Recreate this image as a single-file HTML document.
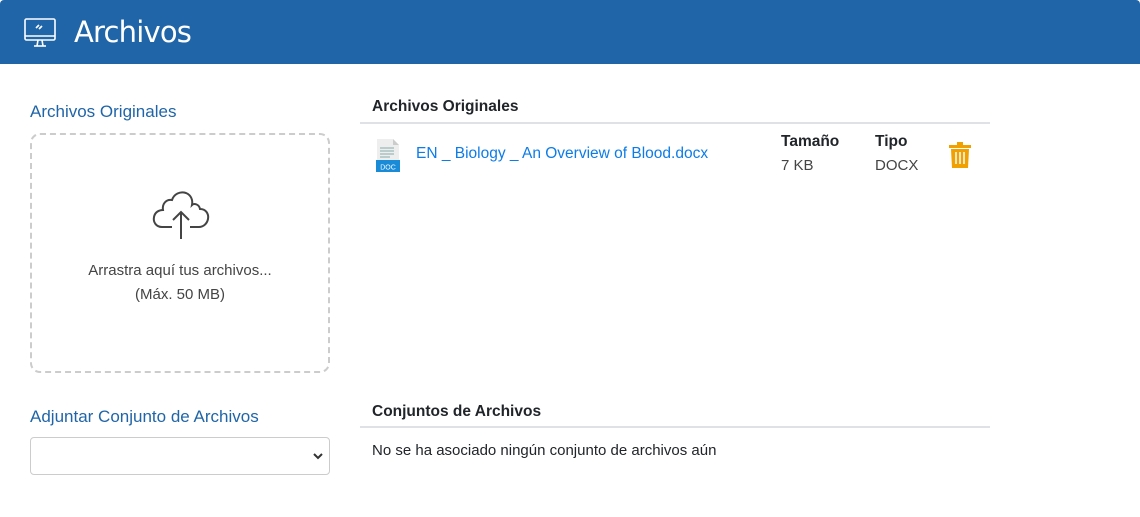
<!DOCTYPE html>
<html><head><meta charset="utf-8"><style>
*{box-sizing:border-box;margin:0;padding:0}
body{width:1140px;height:517px;background:#fff;font-family:"Liberation Sans",sans-serif;position:relative;overflow:hidden;color:#212529}
.hdr{position:absolute;left:0;top:0;width:1140px;height:64px;background:#1f65a8;border-radius:4px 4px 0 0}
.hdr h1{position:absolute;left:74px;top:15px;font-weight:normal;color:#fff;font-size:29px;font-family:"DejaVu Sans","Liberation Sans",sans-serif;letter-spacing:-0.8px}
.lbl{position:absolute;left:30px;color:#1f65a8;font-size:17px}
.drop{position:absolute;left:30px;top:133px;width:300px;height:240px;border:2px dashed #ccc;border-radius:10px;text-align:center;font-size:15px;color:#444}
.sel{position:absolute;left:30px;top:437px;width:300px;height:38px;border:1px solid #ccc;border-radius:4px}
.th{position:absolute;left:372px;font-weight:bold;font-size:15.5px}
.line{position:absolute;left:360px;width:630px;height:2px;background:#dee2e6}
.t{position:absolute;font-size:15px}
</style></head><body>
<div class="hdr">
<svg style="position:absolute;left:24px;top:18px" width="32" height="30" viewBox="0 0 32 30" fill="none" stroke="#fff" stroke-width="1.6"><rect x="1" y="1" width="30" height="21" rx="1.5"/><line x1="1" y1="18" x2="31" y2="18"/><line x1="10" y1="28" x2="22" y2="28"/><line x1="14" y1="22" x2="13" y2="28"/><line x1="18" y1="22" x2="19" y2="28"/><line x1="12" y1="10" x2="15" y2="7"/><line x1="15" y1="11" x2="18" y2="8"/></svg>
<h1>Archivos</h1></div>
<div class="lbl" style="top:102px">Archivos Originales</div>
<div class="drop">
<svg style="position:absolute;left:120px;top:54px" width="58" height="52" viewBox="0 0 58 52" fill="none" stroke="#444" stroke-width="2"><path d="M20 38H10C4 38 1 33 2 28C3 23 7 21 11 21C10 15 14 10 20 11C22 5 28 2 34 4C39 6 41 11 40 16C42 14 47 15 48 20C54 20 57 25 56 30C55 35 51 38 47 38H38"/><path d="M29 50V23M21 31L29 23L37 31"/></svg>
<div style="position:absolute;top:127px;width:100%">Arrastra aquí tus archivos...</div>
<div style="position:absolute;top:151px;width:100%">(Máx. 50 MB)</div>
</div>
<div class="lbl" style="top:407px">Adjuntar Conjunto de Archivos</div>
<div class="sel"><svg style="position:absolute;right:6px;top:14px" width="10" height="8" viewBox="0 0 10 8" fill="none" stroke="#333" stroke-width="2"><path d="M1 2L5 6L9 2"/></svg></div>
<div class="th" style="top:98px">Archivos Originales</div>
<div class="line" style="top:122px"></div>
<svg style="position:absolute;left:375px;top:139px" width="26" height="33" viewBox="0 0 26 33"><path d="M2 0H18L24 6V23H2Z" fill="#eee"/><path d="M18 0V6H24" fill="#ccc"/><g stroke="#8aa" stroke-width="1"><line x1="5" y1="9" x2="19" y2="9"/><line x1="5" y1="12" x2="19" y2="12"/><line x1="5" y1="15" x2="19" y2="15"/><line x1="5" y1="18" x2="15" y2="18"/></g><rect x="1" y="21" width="24" height="12" fill="#1a8bd6"/><text x="13" y="30.5" font-size="7" fill="#fff" text-anchor="middle" font-family="Liberation Sans">DOC</text></svg>
<div class="t" style="left:416px;top:145px;color:#0d7ce8;font-size:15.5px">EN _ Biology _ An Overview of Blood.docx</div>
<div class="t" style="left:781px;top:133px;font-weight:bold;font-size:15.5px">Tamaño</div>
<div class="t" style="left:781px;top:157px;color:#444">7 KB</div>
<div class="t" style="left:875px;top:133px;font-weight:bold;font-size:15.5px">Tipo</div>
<div class="t" style="left:875px;top:157px;color:#444">DOCX</div>
<svg style="position:absolute;left:949px;top:142px" width="22" height="26" viewBox="0 0 22 26"><rect x="0" y="3" width="22" height="3" fill="#f0a000"/><rect x="8" y="0" width="6" height="4" fill="#f0a000"/><path d="M2 7H20L19 26H3Z" fill="#f0a000"/><g stroke="#fff" stroke-width="1.5"><line x1="7" y1="10" x2="7" y2="22"/><line x1="11" y1="10" x2="11" y2="22"/><line x1="15" y1="10" x2="15" y2="22"/></g></svg>
<div class="th" style="top:403px">Conjuntos de Archivos</div>
<div class="line" style="top:426px"></div>
<div class="t" style="left:372px;top:442px">No se ha asociado ningún conjunto de archivos aún</div>
</body></html>
